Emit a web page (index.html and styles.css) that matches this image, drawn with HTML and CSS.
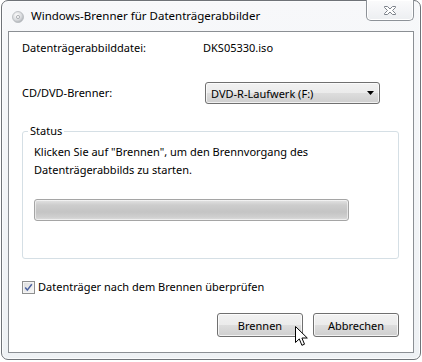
FILE: index.html
```html
<!DOCTYPE html>
<html lang="de">
<head>
<meta charset="utf-8">
<title>Windows-Brenner für Datenträgerabbilder</title>
<link rel="stylesheet" href="styles.css">
</head>
<body>
<div class="window">
  <div class="titlebar">
    <svg class="app-icon" width="12" height="12" viewBox="0 0 12 12">
      <defs>
        <radialGradient id="disc" cx="0.4" cy="0.35" r="0.7">
          <stop offset="0" stop-color="#ffffff"/>
          <stop offset="0.6" stop-color="#d8dadd"/>
          <stop offset="1" stop-color="#a9adb2"/>
        </radialGradient>
      </defs>
      <circle cx="6" cy="6" r="5.5" fill="url(#disc)" stroke="#b4b7bb" stroke-width="0.8"/>
      <circle cx="6" cy="6" r="1.6" fill="#f4f4f4" stroke="#9fa3a8" stroke-width="0.8"/>
    </svg>
    <span class="title">Windows-Brenner für Datenträgerabbilder</span>
    <button class="close" aria-label="Schließen">
      <svg width="14" height="11" viewBox="0 0 14 11">
        <path d="M1.5 1.5h3l2.5 2.5 2.5-2.5h3v1l-3 3 3 3v1h-3l-2.5-2.5-2.5 2.5h-3v-1l3-3-3-3z" fill="#ffffff" stroke="#7d838b" stroke-width="1" stroke-linejoin="round"/>
      </svg>
    </button>
  </div>
  <div class="client">
    <div class="row row-file">
      <span class="label">Datenträgerabbilddatei:</span>
      <span class="value">DKS05330.iso</span>
    </div>
    <div class="row row-drive">
      <span class="label">CD/DVD-Brenner:</span>
      <div class="combo">
        <span>DVD-R-Laufwerk (F:)</span>
        <svg width="7" height="4" viewBox="0 0 7 4"><path d="M0 0h7L3.5 4z" fill="#000"/></svg>
      </div>
    </div>
    <fieldset class="status">
      <legend>Status</legend>
      <p class="status-text">Klicken Sie auf "Brennen", um den Brennvorgang des Datenträgerabbilds zu starten.</p>
      <div class="progress"></div>
    </fieldset>
    <label class="check">
      <span class="box">
        <svg width="9" height="9" viewBox="0 0 9 9"><path d="M1.2 4.6l2.1 2.5L7.8 1.2" fill="none" stroke="#4b61a0" stroke-width="1.5"/></svg>
      </span>
      <span>Datenträger nach dem Brennen überprüfen</span>
    </label>
    <div class="buttons">
      <button class="btn hover">Brennen</button>
      <button class="btn">Abbrechen</button>
      <svg class="cursor" width="13" height="21" viewBox="0 0 13 21">
        <path d="M0.5 0.5v16l3.8-3.6 2.6 6.4 2.6-1.1-2.6-6.2h5.4z" fill="#ffffff" stroke="#000000" stroke-width="1" stroke-linejoin="miter"/>
      </svg>
    </div>
  </div>
</div>
</body>
</html>
```
FILE: styles.css
```css
* { box-sizing: border-box; }
html, body { margin: 0; padding: 0; background: #ffffff; }
body {
  width: 422px;
  height: 362px;
  padding: 0 1px 2px 1px;
  font-family: "Noto Sans", "Open Sans", sans-serif;
  font-size: 11px;
  color: #000;
}
.window {
  width: 420px;
  height: 360px;
  border: 1px solid #6f7378;
  border-radius: 7px;
  background: linear-gradient(#f7f8fa, #eef1f4);
  box-shadow: inset 0 0 0 1px #fbfcfd;
  display: flex;
  flex-direction: column;
}
.titlebar {
  height: 30px;
  display: flex;
  align-items: flex-start;
  padding-left: 10px;
  padding-right: 6px;
}
.app-icon { margin-top: 10px; flex: none; }
.title {
  margin-left: 7px;
  margin-top: 7px;
  font-size: 11.5px;
  line-height: 16px;
  color: #000;
}
.close {
  margin-left: auto;
  margin-top: -1px;
  width: 48px;
  height: 21px;
  border: 1px solid #8d9298;
  border-top: none;
  border-radius: 0 0 5px 5px;
  background: linear-gradient(#fbfbfc, #eceef1);
  box-shadow: inset 0 0 0 1px #ffffff;
  padding: 0;
  display: flex;
  align-items: center;
  justify-content: center;
}
.client {
  margin: 0 6px 0 6px;
  height: 322px;
  border: 1px solid #8b8f94;
  background: #ffffff;
  display: flex;
  flex-direction: column;
  padding: 0 13px 0 13px;
}
.row {
  display: grid;
  grid-template-columns: 181px 1fr;
  align-items: center;
}
.row-file { margin-top: 7px; height: 18px; }
.row-drive { margin-top: 25px; height: 22px; }
.label, .value { line-height: 16px; }
.combo {
  width: 175px;
  height: 22px;
  margin-left: 2px;
  border: 1px solid #707070;
  border-radius: 3px;
  background: linear-gradient(#f2f2f2 0%, #ebebeb 50%, #dddddd 51%, #cfcfcf 100%);
  box-shadow: inset 0 0 0 1px rgba(255,255,255,0.7);
  display: flex;
  align-items: center;
  justify-content: space-between;
  padding: 0 5px 0 5px;
}
.status {
  margin: 19px 1px 0 0;
  padding: 4px 11px 0 11px;
  height: 136px;
  border: 1px solid #d5dfe5;
  border-radius: 3px;
  min-width: 0;
}
.status legend {
  padding: 0 2px;
  margin-left: -6px;
  line-height: 16px;
}
.status-text {
  margin: 0;
  line-height: 18px;
  width: 330px;
}
.progress {
  margin-top: 20px;
  width: 315px;
  height: 22px;
  border: 1px solid #a5a5a5;
  border-radius: 3px;
  background: linear-gradient(#e4e4e4 0%, #cdcdcd 25%, #c4c4c4 60%, #cfcfcf 85%, #dedede 100%);
  box-shadow: inset 0 0 0 1px rgba(255,255,255,0.55);
}
.check {
  margin-top: 20px;
  display: flex;
  align-items: center;
  gap: 3px;
  line-height: 16px;
}
.box {
  width: 13px;
  height: 13px;
  border: 1px solid #8e8f8f;
  background: linear-gradient(135deg, #dcdcdc, #f8f8f8);
  box-shadow: inset 0 0 0 1px #f4f4f4;
  display: flex;
  align-items: center;
  justify-content: center;
}
.buttons {
  margin-top: 18px;
  display: flex;
  justify-content: flex-end;
  gap: 10px;
  padding-right: 1px;
  position: relative;
}
.btn {
  width: 86px;
  height: 24px;
  border: 1px solid #707070;
  border-radius: 3px;
  background: linear-gradient(#f2f2f2 0%, #ebebeb 50%, #dddddd 51%, #cfcfcf 100%);
  box-shadow: inset 0 0 0 1px rgba(255,255,255,0.75);
  font-family: inherit;
  font-size: 11px;
  color: #000;
  padding: 0;
}
.cursor {
  position: absolute;
  left: 273px;
  top: 13px;
}
```
